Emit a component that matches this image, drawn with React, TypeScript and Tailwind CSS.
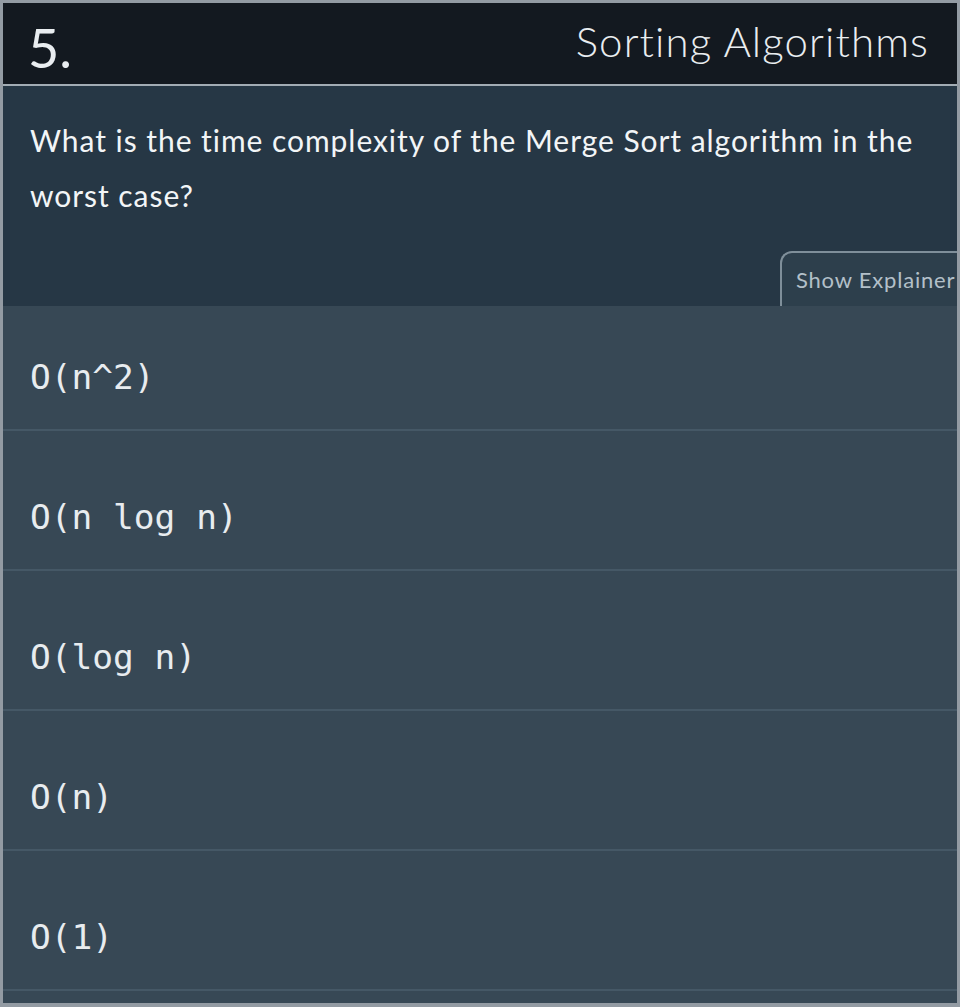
const options = ["O(n^2)", "O(n log n)", "O(log n)", "O(n)", "O(1)"];

export default function App() {
  return (
    <div className="w-[960px] h-[1007px] overflow-hidden bg-[#374855] border-[3px] border-[#939ba3] border-b-[4px] flex flex-col" style={{ fontFamily: "Lato, 'Open Sans', sans-serif" }}>
      {/* Header */}
      <div className="h-[83px] shrink-0 bg-[#131920] border-b-[2px] border-[#a2acb4] flex items-center justify-between pl-[25px] pr-[28px]">
        <span className="text-[54px] leading-none text-[#e9edf0] font-normal mt-[8px]">5.</span>
        <span className="text-[42px] leading-none text-[#e9edf0] font-light tracking-[1.1px] mb-[6px]">Sorting Algorithms</span>
      </div>

      {/* Question */}
      <div className="h-[220px] shrink-0 bg-[#263745] flex flex-col justify-between">
        <p className="pl-[27px] pr-[20px] pt-[27px] text-[30px] leading-[55px] tracking-[0.95px] text-[#f2f5f7]">
          What is the time complexity of the Merge Sort algorithm in the worst case?
        </p>
        <div className="flex justify-end">
          <div className="h-[55px] w-[180px] mr-[-3px] bg-[#2d3f4c] border-t-[2px] border-l-[2px] border-[#7f8f9a] rounded-tl-[12px] flex items-center pl-[14px]">
            <span className="text-[22px] text-[#b3c0c9] tracking-[0.8px] whitespace-nowrap">Show Explainer</span>
          </div>
        </div>
      </div>

      {/* Options */}
      <div className="flex flex-col">
        {options.map((opt, i) => (
          <div
            key={opt}
            className={`${i === 0 ? "h-[125px]" : "h-[140px]"} shrink-0 flex items-end pb-[32px] pl-[27px] border-b-[2px] border-[#455866]`}
          >
            <span className="text-[34.5px] leading-[40px] text-[#e8ecef]" style={{ fontFamily: "'DejaVu Sans Mono', monospace" }}>
              {opt}
            </span>
          </div>
        ))}
      </div>
    </div>
  );
}
